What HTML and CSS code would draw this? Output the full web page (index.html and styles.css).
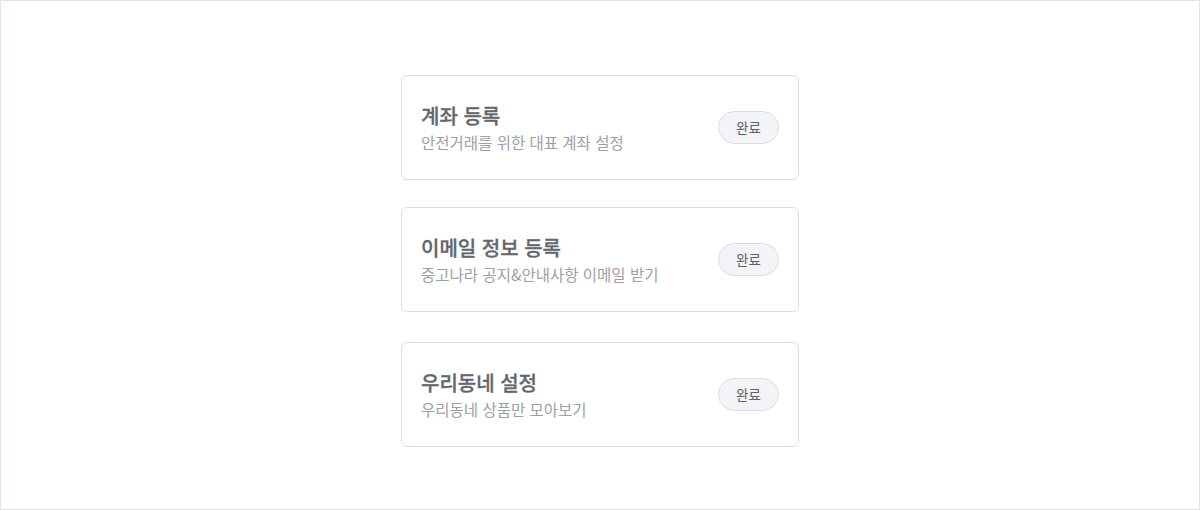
FILE: index.html
```html
<!DOCTYPE html>
<html lang="ko">
<head>
    <meta charset="UTF-8">
    <meta name="viewport" content="width=device-width, initial-scale=1.0">
    <title>설정 완료</title>
    <link rel="stylesheet" href="styles.css">
</head>
<body>

    <div class="page">
        <ul class="setup-list">
            <li class="setup-card">
                <div class="setup-text">
                    <h3 class="setup-title">계좌 등록</h3>
                    <p class="setup-desc">안전거래를 위한 대표 계좌 설정</p>
                </div>
                <button class="done-btn">완료</button>
            </li>

            <li class="setup-card">
                <div class="setup-text">
                    <h3 class="setup-title">이메일 정보 등록</h3>
                    <p class="setup-desc">중고나라 공지&amp;안내사항 이메일 받기</p>
                </div>
                <button class="done-btn">완료</button>
            </li>

            <li class="setup-card">
                <div class="setup-text">
                    <h3 class="setup-title">우리동네 설정</h3>
                    <p class="setup-desc">우리동네 상품만 모아보기</p>
                </div>
                <button class="done-btn">완료</button>
            </li>
        </ul>
    </div>

</body>
</html>
```

FILE: styles.css
```css
body {
    font-family: "Noto Sans CJK KR", "Noto Sans", sans-serif;
    margin: 0;
    padding: 0;
    background-color: #fff;
}

.page {
    box-sizing: border-box;
    height: 510px;
    border: 1px solid #e3e1f0;
    padding-top: 74px;
}

.setup-list {
    list-style: none;
    margin: 0 auto;
    padding: 0;
    width: 398px;
    display: flex;
    flex-direction: column;
    gap: 27px;
}

.setup-card {
    box-sizing: border-box;
    height: 105px;
    border: 1px solid #dcdde2;
    border-radius: 6px;
    padding: 0 19px;
    display: flex;
    align-items: center;
    justify-content: space-between;
}

.setup-card:last-child {
    margin-top: 3px;
}

.setup-title {
    margin: 1px 0 2px;
    font-size: 20px;
    line-height: 26px;
    font-weight: 500;
    color: #62666e;
    -webkit-text-stroke: 0.3px #62666e;
}

.setup-desc {
    margin: 0;
    font-size: 15.5px;
    line-height: 22px;
    color: #9ca0a8;
}

.done-btn {
    width: 61px;
    height: 33px;
    margin-top: -1px;
    border: 1px solid #dadde2;
    border-radius: 17px;
    background-color: #f2f4f7;
    font-family: inherit;
    font-size: 13.5px;
    color: #5d6169;
    cursor: pointer;
    padding: 0;
}
```
